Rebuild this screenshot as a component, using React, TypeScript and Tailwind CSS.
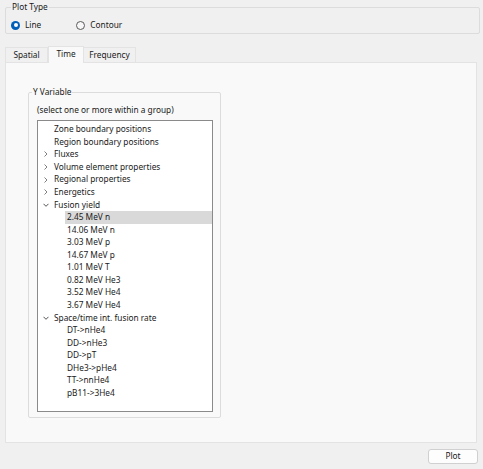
import React from 'react'

type Row = { label: string; level: 0 | 1; chevron?: 'right' | 'down'; selected?: boolean }

const ROWS: Row[] = [
  { label: 'Zone boundary positions', level: 0 },
  { label: 'Region boundary positions', level: 0 },
  { label: 'Fluxes', level: 0, chevron: 'right' },
  { label: 'Volume element properties', level: 0, chevron: 'right' },
  { label: 'Regional properties', level: 0, chevron: 'right' },
  { label: 'Energetics', level: 0, chevron: 'right' },
  { label: 'Fusion yield', level: 0, chevron: 'down' },
  { label: '2.45 MeV n', level: 1, selected: true },
  { label: '14.06 MeV n', level: 1 },
  { label: '3.03 MeV p', level: 1 },
  { label: '14.67 MeV p', level: 1 },
  { label: '1.01 MeV T', level: 1 },
  { label: '0.82 MeV He3', level: 1 },
  { label: '3.52 MeV He4', level: 1 },
  { label: '3.67 MeV He4', level: 1 },
  { label: 'Space/time int. fusion rate', level: 0, chevron: 'down' },
  { label: 'DT->nHe4', level: 1 },
  { label: 'DD->nHe3', level: 1 },
  { label: 'DD->pT', level: 1 },
  { label: 'DHe3->pHe4', level: 1 },
  { label: 'TT->nnHe4', level: 1 },
  { label: 'pB11->3He4', level: 1 },
]

function Chevron({ dir }: { dir: 'right' | 'down' }) {
  return (
    <svg width="6" height="6" viewBox="0 0 6 6" className="shrink-0">
      {dir === 'right' ? (
        <polyline points="1.5,0.5 4,3 1.5,5.5" fill="none" stroke="#707070" strokeWidth="0.9" />
      ) : (
        <polyline points="0.5,1.8 3,4.3 5.5,1.8" fill="none" stroke="#404040" strokeWidth="0.9" />
      )}
    </svg>
  )
}

function Radio({ checked, label }: { checked?: boolean; label: string }) {
  return (
    <div className="flex items-center gap-[5px]">
      {checked ? (
        <span className="w-[9px] h-[9px] rounded-full bg-[#005fb8] flex items-center justify-center">
          <span className="w-[4px] h-[4px] rounded-full bg-white" />
        </span>
      ) : (
        <span className="w-[9px] h-[9px] rounded-full border border-[#5a5a5a] bg-[#f7f7f7]" />
      )}
      <span>{label}</span>
    </div>
  )
}

export default function App() {
  return (
    <div
      className="w-[483px] h-[469px] bg-[#f0f0f0] text-[8.3px] text-[#1a1a1a] flex flex-col overflow-hidden"
      style={{ fontFamily: '"Noto Sans", "Open Sans", sans-serif' }}
    >
      {/* Plot Type */}
      <fieldset className="mx-[5px] mr-[3px] h-[34px] border border-[#dcdcdc] rounded-[2px] px-[4px]">
        <legend className="ml-[1px] px-[1px] leading-[14px]">Plot Type</legend>
        <div className="flex items-center gap-[35px] pl-[1px] pt-[2px] h-[20px]">
          <Radio checked label="Line" />
          <Radio label="Contour" />
        </div>
      </fieldset>

      {/* Tabs */}
      <div className="mt-[11px] ml-[5px] flex items-end h-[17px]">
        <div className="w-[43px] h-[15px] bg-[#f0f0f0] border border-b-0 border-[#e3e3e3] flex items-center justify-center">
          Spatial
        </div>
        <div className="w-[36px] h-[17px] bg-[#f9f9f9] border border-b-0 border-[#e3e3e3] flex items-center justify-center pb-[2px] relative z-10 -mb-[1px]">
          Time
        </div>
        <div className="w-[52px] h-[15px] bg-[#f0f0f0] border border-b-0 border-l-0 border-[#e3e3e3] flex items-center justify-center">
          Frequency
        </div>
      </div>

      {/* Pane */}
      <div className="ml-[5px] w-[472px] h-[381px] bg-[#f9f9f9] border border-[#e3e3e3] pt-[22px] pl-[22px]">
        <fieldset className="w-[193px] h-[333px] border border-[#dcdcdc] rounded-[2px] pl-[8px]">
          <legend className="-ml-[5px] px-[1px] leading-[14px]">Y Variable</legend>
          <div className="leading-[14px] mt-[4px]">(select one or more within a group)</div>
          <div className="mt-[3px] w-[176px] h-[292px] border border-[#8a8a8a] bg-white pt-[2px]">
            {ROWS.map((r) => (
              <div
                key={r.label}
                className={`h-[12.57px] flex items-center leading-none whitespace-nowrap ${
                  r.selected ? 'bg-[#d9d9d9] ml-[27px]' : ''
                }`}
              >
                {r.level === 0 ? (
                  <>
                    <span className="w-[16px] pl-[5px] flex items-center">
                      {r.chevron && <Chevron dir={r.chevron} />}
                    </span>
                    <span>{r.label}</span>
                  </>
                ) : (
                  <span className={r.selected ? 'pl-[2px]' : 'pl-[29px]'}>{r.label}</span>
                )}
              </div>
            ))}
          </div>
        </fieldset>
      </div>

      {/* Footer */}
      <div className="flex justify-end pr-[5px] mt-[6px]">
        <button className="w-[50px] h-[15px] bg-[#fdfdfd] border border-[#d0d0d0] rounded-[3px] flex items-center justify-center leading-none">
          Plot
        </button>
      </div>
    </div>
  )
}
